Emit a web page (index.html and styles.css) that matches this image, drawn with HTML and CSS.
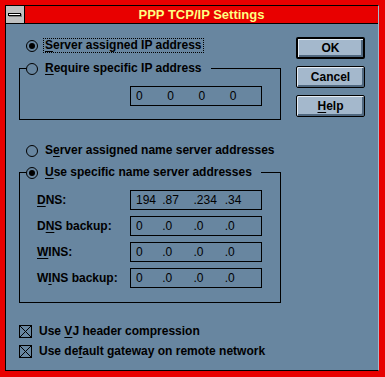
FILE: index.html
```html
<!DOCTYPE html>
<html lang="en">
<head>
    <meta charset="UTF-8">
    <meta name="viewport" content="width=device-width, initial-scale=1.0">
    <title>PPP TCP/IP Settings</title>
    <link rel="stylesheet" href="styles.css">
</head>
<body>
    <div class="window">
        <div class="frame">
            <div class="titlebar">
                <div class="sysmenu"><span class="sysbar"></span></div>
                <div class="title">PPP TCP/IP Settings</div>
            </div>

            <div class="client">
                <div class="main">
                    <div class="option">
                        <span class="radio checked"></span>
                        <span class="label focus"><u>S</u>erver assigned IP address</span>
                    </div>

                    <fieldset class="group group-ip">
                        <legend class="option">
                            <span class="radio"></span>
                            <span class="label"><u>R</u>equire specific IP address</span>
                        </legend>
                        <div class="group-body">
                            <div class="ipfield">
                                <span class="seg">0</span><span class="seg">0</span><span class="seg">0</span><span class="seg">0</span>
                            </div>
                        </div>
                    </fieldset>

                    <div class="option option-gap">
                        <span class="radio"></span>
                        <span class="label">S<u>e</u>rver assigned name server addresses</span>
                    </div>

                    <fieldset class="group group-dns">
                        <legend class="option">
                            <span class="radio checked"></span>
                            <span class="label"><u>U</u>se specific name server addresses</span>
                        </legend>
                        <div class="group-body">
                            <div class="field-row">
                                <span class="field-label"><u>D</u>NS:</span>
                                <div class="ipfield">
                                    <span class="seg">194</span><span class="seg dot">.87</span><span class="seg dot">.234</span><span class="seg dot">.34</span>
                                </div>
                            </div>
                            <div class="field-row">
                                <span class="field-label">D<u>N</u>S backup:</span>
                                <div class="ipfield">
                                    <span class="seg">0</span><span class="seg dot">.0</span><span class="seg dot">.0</span><span class="seg dot">.0</span>
                                </div>
                            </div>
                            <div class="field-row">
                                <span class="field-label"><u>W</u>INS:</span>
                                <div class="ipfield">
                                    <span class="seg">0</span><span class="seg dot">.0</span><span class="seg dot">.0</span><span class="seg dot">.0</span>
                                </div>
                            </div>
                            <div class="field-row">
                                <span class="field-label">W<u>I</u>NS backup:</span>
                                <div class="ipfield">
                                    <span class="seg">0</span><span class="seg dot">.0</span><span class="seg dot">.0</span><span class="seg dot">.0</span>
                                </div>
                            </div>
                        </div>
                    </fieldset>

                    <div class="checks">
                        <div class="check-row">
                            <svg class="checkbox" width="13" height="13" viewBox="0 0 13 13">
                                <rect x="0.5" y="0.5" width="12" height="12" fill="none" stroke="#000"/>
                                <path d="M1 1 L12 12 M12 1 L1 12" stroke="#000" stroke-width="1"/>
                            </svg>
                            <span class="label">Use <u>V</u>J header compression</span>
                        </div>
                        <div class="check-row">
                            <svg class="checkbox" width="13" height="13" viewBox="0 0 13 13">
                                <rect x="0.5" y="0.5" width="12" height="12" fill="none" stroke="#000"/>
                                <path d="M1 1 L12 12 M12 1 L1 12" stroke="#000" stroke-width="1"/>
                            </svg>
                            <span class="label">Use de<u>f</u>ault gateway on remote network</span>
                        </div>
                    </div>
                </div>

                <div class="buttons">
                    <button class="btn btn-default">OK</button>
                    <button class="btn">Cancel</button>
                    <button class="btn"><u>H</u>elp</button>
                </div>
            </div>
        </div>
    </div>
</body>
</html>
```

FILE: styles.css
```css
/* Windows 3.1 style dialog */
body {
    margin: 0;
    background: #e80000;
    font-family: "Liberation Sans", Arial, sans-serif;
}

.window {
    width: 385px;
    height: 377px;
    box-sizing: border-box;
    border-style: solid;
    border-color: #e80000;
    border-width: 5px 6px 6px 5px;
}

.frame {
    height: 100%;
    box-sizing: border-box;
    border: 1px solid #000;
    border-right-color: #a4b8cc;
    display: flex;
    flex-direction: column;
    background: #6886a0;
}

/* title bar */
.titlebar {
    display: flex;
    height: 17px;
    border-bottom: 1px solid #000;
    background: #e80000;
}

.sysmenu {
    width: 18px;
    border-right: 1px solid #000;
    background: #c0c0c0;
    display: flex;
    align-items: center;
    padding-left: 2px;
    box-sizing: content-box;
    width: 16px;
}

.sysbar {
    width: 11px;
    height: 1px;
    background: #fff;
    border: 1px solid #000;
    box-shadow: 1px 1px 0 #808080;
}

.title {
    flex: 1;
    text-align: center;
    color: #ffff80;
    font-weight: bold;
    font-size: 13px;
    line-height: 17px;
}

/* client area */
.client {
    flex: 1;
    display: flex;
    padding: 13px 0 0 13px;
}

.main {
    width: 262px;
    padding-top: 1px;
}

.option {
    display: flex;
    align-items: center;
    height: 15px;
    font-size: 12px;
    font-weight: bold;
    color: #000;
}

.radio {
    width: 10px;
    height: 10px;
    border: 1px solid #000;
    border-radius: 50%;
    margin-left: 7px;
    position: relative;
}

.radio.checked::after {
    content: "";
    position: absolute;
    left: 2px;
    top: 2px;
    width: 6px;
    height: 6px;
    border-radius: 50%;
    background: #000;
}

.label {
    font-size: 12px;
    font-weight: bold;
    line-height: 13px;
    border: 1px dotted transparent;
    padding: 0 1px;
    white-space: nowrap;
}

.option .label {
    margin-left: 5px;
}

.label.focus {
    border-color: #000;
}

u {
    text-decoration-thickness: 1px;
    text-underline-offset: 2px;
}

/* group boxes */
.group {
    margin: 8px 0 0 0;
    padding: 0;
    border: 1px solid #000;
    min-width: 0;
}

.group legend {
    padding: 0 7px 0 0;
    margin-left: 6px;
}

.group legend .radio {
    margin-left: 0;
}

.group-body {
    padding: 10px 0 13px 0;
}

.group-dns {
    margin-top: 7px;
}

.group-dns .group-body {
    padding-bottom: 14px;
    display: flex;
    flex-direction: column;
    gap: 6px;
}

.option-gap {
    margin-top: 23px;
}

.field-row {
    display: flex;
    align-items: center;
    padding-left: 17px;
}

.field-label {
    width: 93px;
    font-size: 12px;
    font-weight: bold;
}

.ipfield {
    width: 132px;
    height: 20px;
    box-sizing: border-box;
    border: 1px solid #000;
    padding-left: 5px;
    display: flex;
    align-items: center;
    font-size: 12px;
    color: #000;
}

.group-ip .ipfield {
    margin-left: 110px;
}

.seg {
    display: inline-block;
    width: 32px;
    white-space: nowrap;
}

.seg.dot {
    text-indent: -5px;
}

/* checkboxes */
.checks {
    margin-top: 18px;
}

.check-row {
    display: flex;
    align-items: center;
    height: 20px;
}

.check-row .label {
    margin-left: 5px;
}

/* buttons */
.buttons {
    margin-left: 15px;
    display: flex;
    flex-direction: column;
    gap: 7px;
}

.btn {
    width: 69px;
    height: 22px;
    box-sizing: border-box;
    border: 1px solid #000;
    border-radius: 2px;
    background: #a4b8cc;
    box-shadow: inset 1px 1px 0 #e4ecf4, inset -2px -2px 0 #506880;
    font-family: "Liberation Sans", Arial, sans-serif;
    font-size: 12px;
    font-weight: bold;
    color: #000;
    padding: 0;
}

.btn-default {
    border-width: 2px;
}
```
